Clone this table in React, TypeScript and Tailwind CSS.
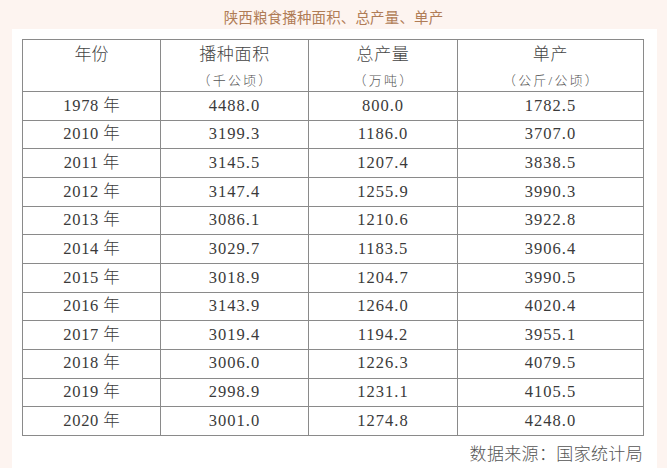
const rows: [string, string, string, string][] = [
  ["1978", "4488.0", "800.0", "1782.5"],
  ["2010", "3199.3", "1186.0", "3707.0"],
  ["2011", "3145.5", "1207.4", "3838.5"],
  ["2012", "3147.4", "1255.9", "3990.3"],
  ["2013", "3086.1", "1210.6", "3922.8"],
  ["2014", "3029.7", "1183.5", "3906.4"],
  ["2015", "3018.9", "1204.7", "3990.5"],
  ["2016", "3143.9", "1264.0", "4020.4"],
  ["2017", "3019.4", "1194.2", "3955.1"],
  ["2018", "3006.0", "1226.3", "4079.5"],
  ["2019", "2998.9", "1231.1", "4105.5"],
  ["2020", "3001.0", "1274.8", "4248.0"],
];

const serif = "font-['Liberation_Serif','Noto_Sans_CJK_SC',serif]";

export default function App() {
  return (
    <div className="w-[667px] h-[468px] overflow-hidden bg-[#fdf4f0] font-['Noto_Sans_CJK_SC',sans-serif]">
      <div className="h-[29px] flex items-center justify-center pt-[5px] text-[14.5px] text-[#b07c56] tracking-[0.01em]">
        陕西粮食播种面积、总产量、单产
      </div>
      <div className="ml-3 mr-[10px] h-[439px] bg-white pl-[10px] pr-[14px] pt-[10px]">
        <table className={`w-[621px] border-collapse border border-[#8a8a8a] table-fixed text-[#3a3a3a] ${serif}`}>
          <colgroup>
            <col className="w-[138px]" />
            <col className="w-[148px]" />
            <col className="w-[149px]" />
            <col className="w-[186px]" />
          </colgroup>
          <thead>
            <tr className="h-[52px]">
              <th className="border border-[#8a8a8a] align-top pt-[5px] font-light text-[17px] leading-[20px] text-[#444]">年份</th>
              {[
                ["播种面积", "（千公顷）"],
                ["总产量", "（万吨）"],
                ["单产", "（公斤/公顷）"],
              ].map(([a, b]) => (
                <th key={a} className="border border-[#8a8a8a] align-top pt-[5px] font-light text-[#444]">
                  <div className="text-[17px] leading-[20px] tracking-[0.04em]">{a}</div>
                  <div className="mt-[8px] pl-[2px] text-[13px] leading-[16px] text-[#555] tracking-[0.17em]">{b}</div>
                </th>
              ))}
            </tr>
          </thead>
          <tbody>
            {rows.map(([y, a, b, c]) => (
              <tr key={y} className="h-[28.67px] text-[16.5px] leading-none">
                <td className="border border-[#8a8a8a] text-center">
                  <span className="tracking-[0.04em]">{y}</span> <span className="font-light">年</span>
                </td>
                <td className="border border-[#8a8a8a] text-center tracking-[0.06em]">{a}</td>
                <td className="border border-[#8a8a8a] text-center tracking-[0.06em]">{b}</td>
                <td className="border border-[#8a8a8a] text-center tracking-[0.06em]">{c}</td>
              </tr>
            ))}
          </tbody>
        </table>
        <div className="mt-[6px] text-right text-[17px] leading-[22px] text-[#555] font-light tracking-[0.02em]">
          数据来源：国家统计局
        </div>
      </div>
    </div>
  );
}
